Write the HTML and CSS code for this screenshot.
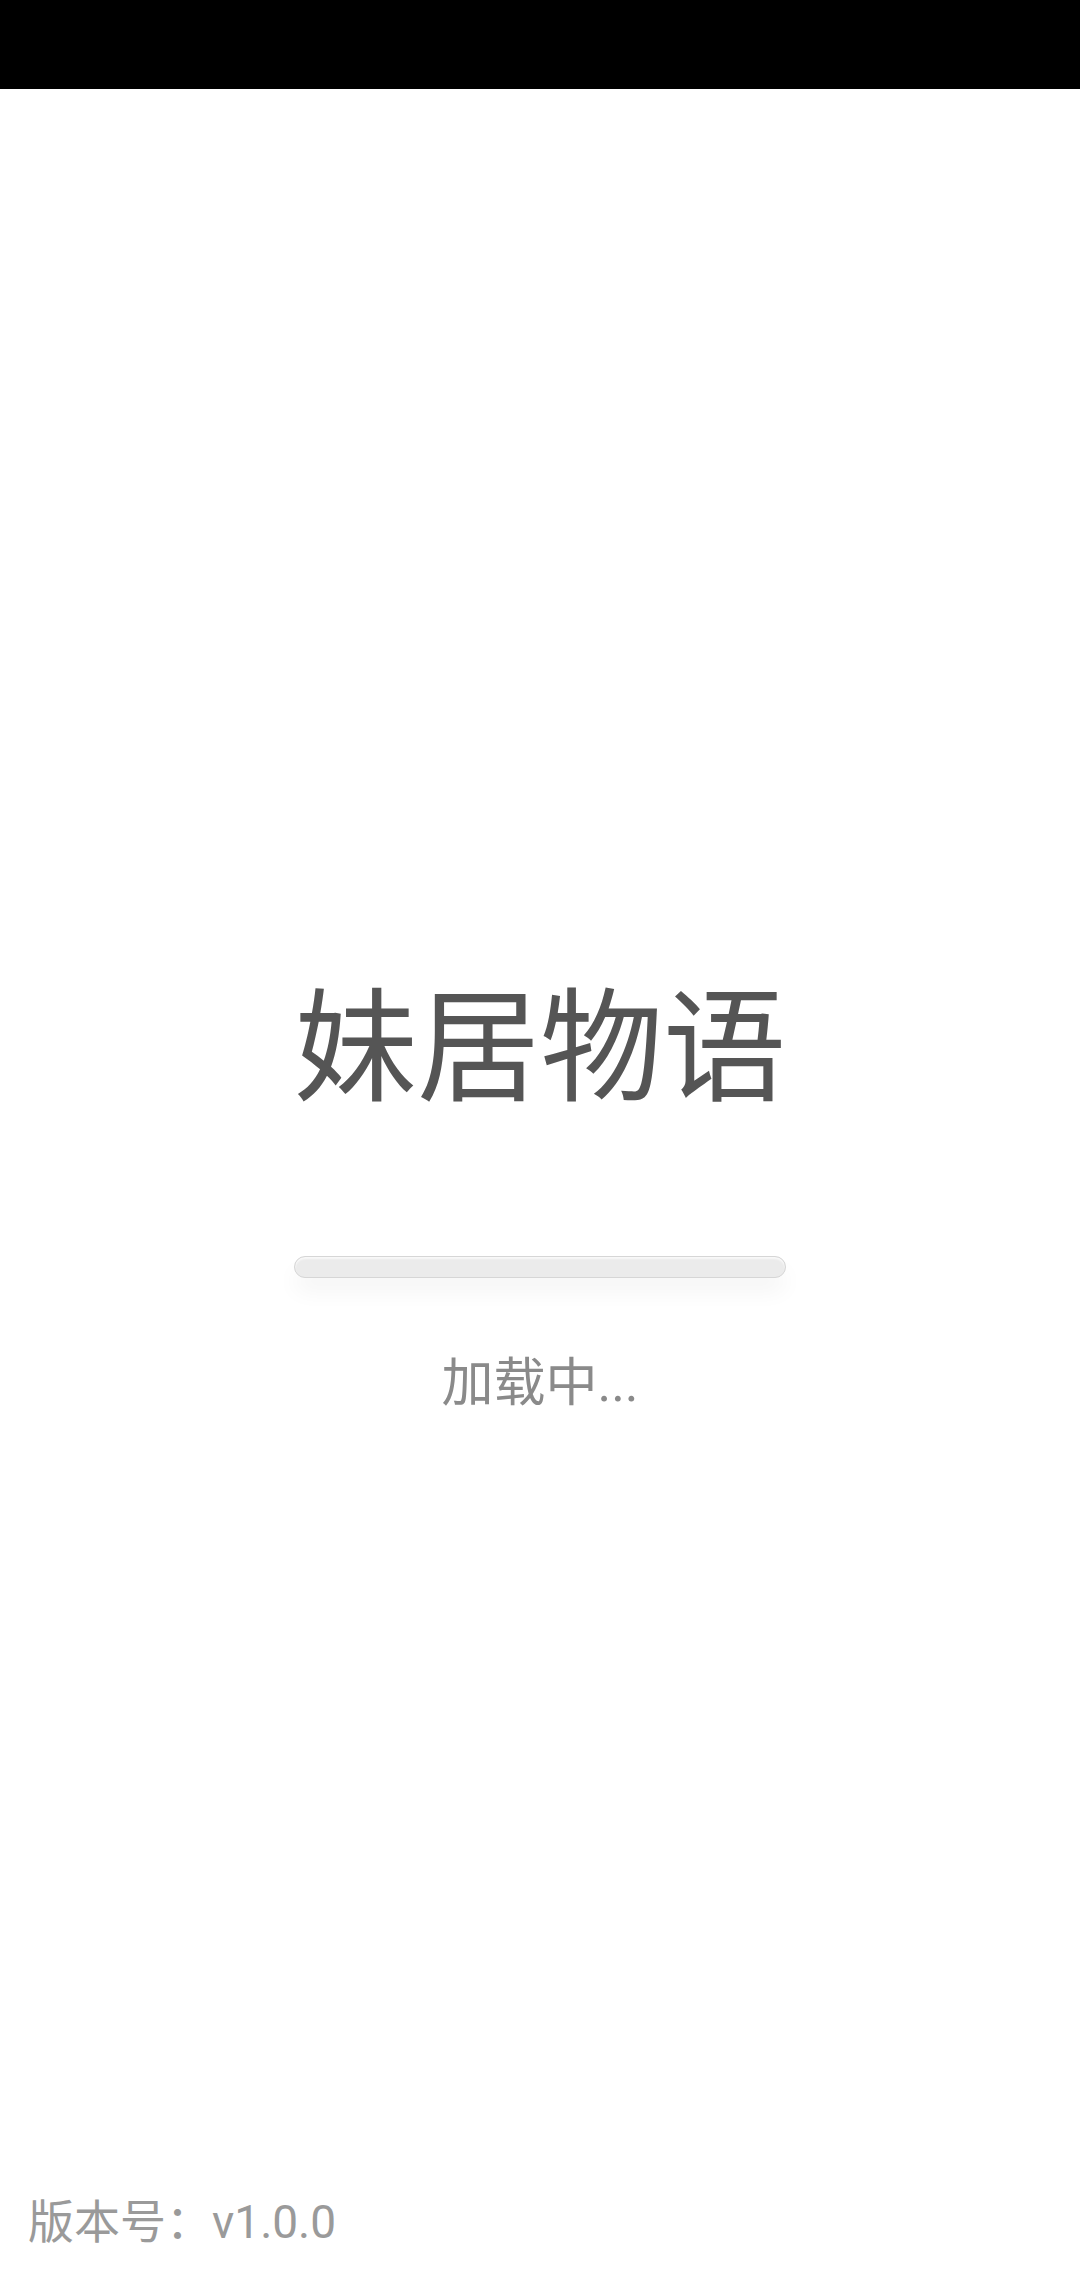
FILE: index.html
```html
<!DOCTYPE html>
<html lang="zh-CN">
<head>
<meta charset="utf-8">
<title>妹居物语</title>
<link rel="stylesheet" href="styles.css">
</head>
<body>
<div class="page">
  <div class="statusbar"></div>
  <main class="main">
    <h1 class="title">妹居物语</h1>
    <div class="progress"><div class="progress-fill"></div></div>
    <p class="loading">加载中...</p>
  </main>
  <footer class="footer">版本号：v1.0.0</footer>
</div>
</body>
</html>
```
FILE: styles.css
```css
html, body {
  margin: 0;
  padding: 0;
  background: #ffffff;
}
.page {
  width: 1080px;
  min-height: 2280px;
  display: flex;
  flex-direction: column;
  font-family: Roboto, "Noto Sans CJK SC", "Noto Sans", sans-serif;
}
.statusbar {
  height: 89px;
  background: #000000;
  flex: none;
}
.main {
  display: flex;
  flex-direction: column;
  align-items: center;
}
.title {
  margin: 899px 0 0 0;
  font-size: 123px;
  line-height: 1;
  font-weight: 400;
  color: #555555;
  letter-spacing: 0;
}
.progress {
  margin-top: 145px;
  width: 490px;
  height: 20px;
  border: 1px solid #d6d6d6;
  border-radius: 11px;
  background: #ebebeb;
  box-shadow: 0 14px 22px rgba(0, 0, 0, 0.045), inset 0 2px 2px rgba(255,255,255,0.7);
}
.progress-fill {
  width: 0;
  height: 100%;
}
.loading {
  margin: 80px 0 0 0;
  font-size: 52px;
  line-height: 1;
  color: #8a8a8a;
}
.footer {
  margin-top: auto;
  padding: 0 0 35px 28px;
  font-size: 46px;
  line-height: 1;
  color: #9a9a9a;
}
```
